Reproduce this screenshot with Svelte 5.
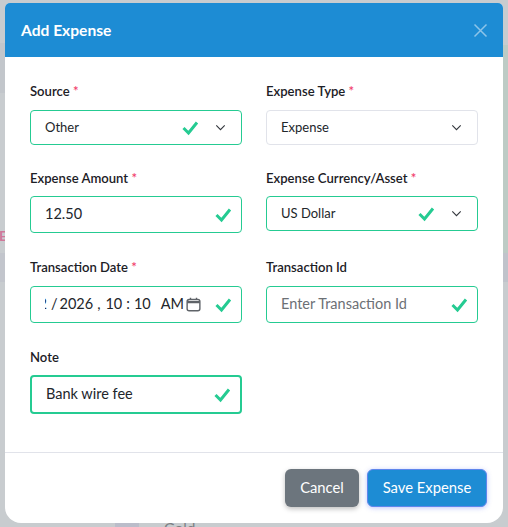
<script>
	const check = 'M2.5 9 L7.5 14 L16 3.5';
</script>

{#snippet tick(cls)}
	<svg class="tick {cls}" viewBox="0 0 18 18" fill="none"><path d={check} /></svg>
{/snippet}

{#snippet chevron()}
	<svg class="chevron" viewBox="0 0 11 11" fill="none"><path d="M1.3 3.4 L5.5 7.6 L9.7 3.4" /></svg>
{/snippet}

<div class="backdrop">
	<div class="strip left"></div>
	<div class="strip right"></div>
	<div class="patch"></div>
	<span class="behind-e">E</span>
	<span class="behind-gold">Gold</span>
	<div class="modal">
		<header>
			<h2>Add Expense</h2>
			<svg class="close" viewBox="0 0 15 15" fill="none"><path d="M1.5 1.5 L13.5 13.5 M13.5 1.5 L1.5 13.5" /></svg>
		</header>
		<div class="body">
			<div class="field row-a">
				<div class="label">Source <span class="req">*</span></div>
				<div class="control ok select"><span class="val">Other</span>{@render tick('sel')}{@render chevron()}</div>
			</div>
			<div class="field row-a">
				<div class="label">Expense Type <span class="req">*</span></div>
				<div class="control select"><span class="val">Expense</span>{@render chevron()}</div>
			</div>
			<div class="field">
				<div class="label tight">Expense Amount <span class="req">*</span></div>
				<div class="control ok tall"><span class="val big">12.50</span>{@render tick('')}</div>
			</div>
			<div class="field">
				<div class="label tight">Expense Currency/Asset <span class="req">*</span></div>
				<div class="control ok select"><span class="val">US Dollar</span>{@render tick('sel')}{@render chevron()}</div>
			</div>
			<div class="field">
				<div class="label">Transaction Date <span class="req">*</span></div>
				<div class="control ok tall">
					<div class="val big dt">
						<span>02</span><span>/</span><span class="year">2026</span><span class="comma">,</span><span>10</span><span>:</span><span>10</span><span class="ampm">AM</span>
					</div>
					<svg class="cal" viewBox="0 0 16 16" fill="none"><rect x="1.2" y="2.7" width="13.6" height="12" rx="2.2" /><path class="band" d="M1.2 5.4 H14.8" /><path d="M4.8 0.8 V3 M11.2 0.8 V3" /></svg>
					{@render tick('')}
				</div>
			</div>
			<div class="field">
				<div class="label">Transaction Id</div>
				<div class="control ok tall"><span class="val big ph">Enter Transaction Id</span>{@render tick('')}</div>
			</div>
			<div class="field">
				<div class="label tight">Note</div>
				<div class="control ok focus"><span class="val big">Bank wire fee</span>{@render tick('')}</div>
			</div>
		</div>
		<footer>
			<button class="cancel">Cancel</button>
			<button class="save">Save Expense</button>
		</footer>
	</div>
</div>

<style>
	:global(body) {
		margin: 0;
		font-family: Lato, "Noto Sans", sans-serif;
	}

	.backdrop {
		position: relative;
		width: 508px;
		height: 527px;
		overflow: hidden;
		box-sizing: border-box;
		padding: 3px 5px 0;
		background: #c8cccf;
	}

	/* page behind the overlay shows through at the edges */
	.strip {
		position: absolute;
		width: 5px;
	}

	.strip.left {
		left: 0;
		top: 43px;
		height: 239px;
		background: linear-gradient(#c2c6cb 0 50px, #c8cccf 50px 210px, #c2c5cc 210px);
	}

	.strip.right {
		right: 0;
		top: 45px;
		height: 237px;
		background: linear-gradient(#bdcbc5 0 208px, #c0c3cb 208px);
	}

	.patch {
		position: absolute;
		left: 115px;
		top: 523px;
		width: 24px;
		height: 4px;
		background: #bbbdca;
	}

	.behind-e {
		position: absolute;
		left: -1px;
		top: 227px;
		font-size: 14px;
		font-weight: 700;
		color: #d0789a;
	}

	.behind-gold {
		position: absolute;
		left: 164px;
		top: 519px;
		font-size: 15px;
		color: #7d8184;
	}

	.modal {
		position: relative;
		height: 520px;
		background: #fff;
		border-radius: 5px 5px 16px 16px;
		overflow: hidden;
		display: flex;
		flex-direction: column;
	}

	header {
		height: 54px;
		flex: none;
		background: #1d8cd4;
		display: flex;
		align-items: center;
		justify-content: space-between;
		padding: 0 15px 0 16px;
		color: #fff;
	}

	h2 {
		margin: 0;
		font-size: 15.6px;
		font-weight: 700;
	}

	.close {
		width: 15px;
		height: 15px;
		margin-top: 1px;
		stroke: #8cc4e9;
		stroke-width: 1.5;
	}

	.body {
		flex: 1;
		display: grid;
		grid-template-columns: 212px 212px;
		column-gap: 24px;
		align-content: start;
		padding: 26px 25px 0;
	}

	.field {
		margin-bottom: 26px;
	}

	.field.row-a {
		margin-bottom: 25px;
	}

	.label {
		font-size: 13.1px;
		font-weight: 600;
		line-height: 16px;
		margin-bottom: 11px;
		color: #1c2026;
	}

	.label.tight {
		margin-bottom: 10px;
	}

	.req {
		color: #f1416c;
	}

	.control {
		height: 35px;
		box-sizing: border-box;
		border: 1px solid #e1e3ea;
		border-radius: 4px;
		display: flex;
		align-items: center;
		padding: 0 14px;
		color: #22262b;
	}

	.control.ok {
		border-color: #25cb92;
	}

	.control.tall {
		height: 37px;
	}

	.control.select {
		padding-right: 15px;
	}

	.control.focus {
		height: 39px;
		border-width: 2px;
	}

	.val {
		flex: 1;
		min-width: 0;
		font-size: 13px;
		white-space: nowrap;
		padding-bottom: 2px;
	}

	.val.big {
		font-size: 14.5px;
	}

	.ph {
		color: #6c7075;
	}

	.dt {
		display: flex;
		justify-content: flex-end;
		gap: 4px;
		overflow: hidden;
		margin-right: 2px;
	}

	.dt span {
		flex: none;
	}

	.dt .year {
		margin-left: -2px;
	}

	.dt .comma {
		margin-right: 1px;
	}

	.dt .ampm {
		margin-left: 6px;
	}

	.tick {
		width: 18px;
		height: 18px;
		flex: none;
		margin-right: -5px;
		stroke: #25cb92;
		stroke-width: 3;
	}

	.tick.sel {
		margin-right: 16px;
	}

	.chevron {
		width: 11px;
		height: 11px;
		flex: none;
		stroke: #33373d;
		stroke-width: 1.1;
	}

	.cal {
		width: 15px;
		height: 15px;
		flex: none;
		margin-right: 13px;
		stroke: #5f6368;
		stroke-width: 1.5;
	}

	.cal .band {
		stroke-width: 2.4;
	}

	footer {
		height: 71px;
		flex: none;
		box-sizing: border-box;
		border-top: 1px solid #e1e3ea;
		display: flex;
		justify-content: flex-end;
		align-items: center;
		gap: 8px;
		padding: 0 16px 0 0;
	}

	button {
		height: 38px;
		box-sizing: border-box;
		border-radius: 6px;
		border: 1px solid transparent;
		padding: 0 0 2px;
		font-family: inherit;
		font-size: 14.8px;
		color: #fff;
	}

	.cancel {
		width: 74px;
		background: #6c757d;
		box-shadow: 0 2px 5px rgba(0, 0, 0, 0.25);
	}

	.save {
		width: 120px;
		background: #1d8cd4;
		border-color: #5f86ec;
		box-shadow: 0 1px 5px rgba(70, 90, 240, 0.35);
	}
</style>
